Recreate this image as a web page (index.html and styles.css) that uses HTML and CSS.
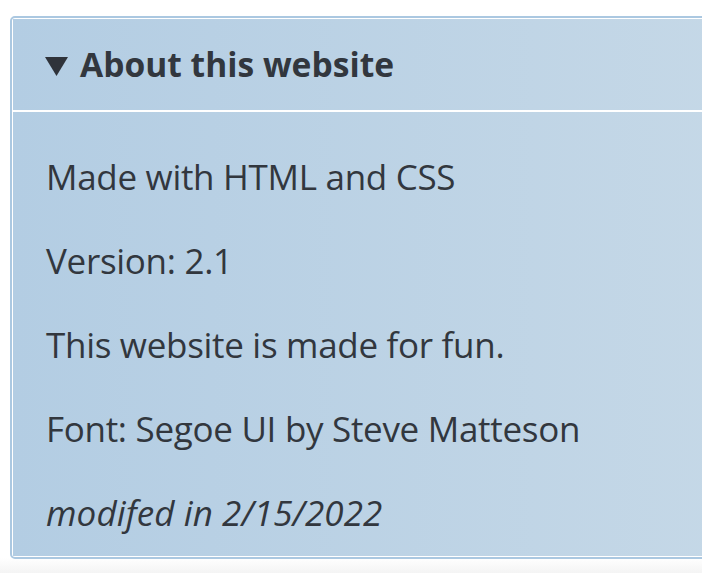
FILE: index.html
```html
<!DOCTYPE html>
<html lang="en">
<head>
<meta charset="utf-8">
<title>About this website</title>
<link rel="stylesheet" href="styles.css">
</head>
<body>
<details class="about" open>
  <summary class="about-summary">
    <svg class="marker" width="23" height="19" viewBox="0 0 23 19"><polygon points="0,0 23,0 11.5,19" fill="#2f333a"/></svg>
    <span class="title">About this website</span>
  </summary>
  <div class="about-body">
    <p class="line">Made with HTML and CSS</p>
    <p class="line">Version: 2.1</p>
    <p class="line">This website is made for fun.</p>
    <p class="line">Font: Segoe UI by Steve Matteson</p>
    <p class="line modified">modifed in 2/15/2022</p>
  </div>
</details>
</body>
</html>
```

FILE: styles.css
```css
html, body {
  margin: 0;
  padding: 0;
}
body {
  background: linear-gradient(to bottom, #ffffff 0, #ffffff 558px, #f4f4f4 573px);
  min-height: 573px;
  padding: 16px 0 0 10px;
  box-sizing: border-box;
  font-family: "Open Sans", "Noto Sans", sans-serif;
  color: #32373e;
  overflow: hidden;
}
.about {
  width: 720px;
  border: 2px solid #abc8e1;
  border-radius: 5px;
  padding: 1px;
  background: #ffffff;
}
.about-summary {
  list-style: none;
  display: flex;
  align-items: center;
  gap: 12px;
  height: 91px;
  padding-left: 32px;
  box-sizing: border-box;
  background: linear-gradient(to right, #b3cde3, #c5d8e7);
  cursor: pointer;
}
.about-summary::-webkit-details-marker { display: none; }
.marker {
  display: block;
  margin-top: 4px;
}
.title {
  font-weight: 700;
  font-size: 33.6px;
  line-height: 1;
}
.about-body {
  margin-top: 2px;
  background: linear-gradient(to right, #b3cde3, #c5d8e7);
  padding: 41px 0 19px 33px;
}
.line {
  margin: 0 0 36px;
  font-size: 35px;
  line-height: 48px;
  letter-spacing: -0.3px;
}
.line:last-child { margin-bottom: 0; }
.modified {
  font-style: italic;
  letter-spacing: 0.1px;
}
```
